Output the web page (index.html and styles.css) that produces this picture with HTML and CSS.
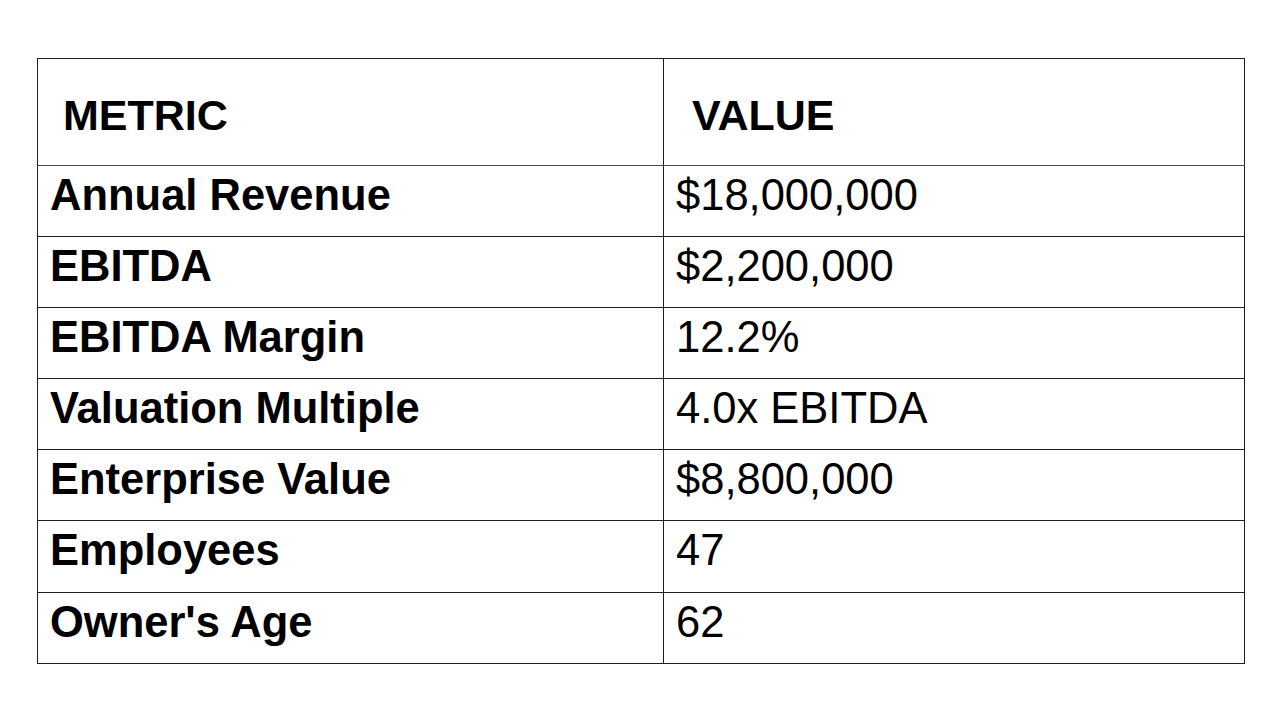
FILE: index.html
```html
<!DOCTYPE html>
<html lang="en">
<head>
<meta charset="utf-8">
<title>Metrics</title>
<link rel="stylesheet" href="styles.css">
</head>
<body>
<div class="page">
  <table class="metrics">
    <colgroup>
      <col class="col-metric">
      <col class="col-value">
    </colgroup>
    <thead>
      <tr>
        <th class="h-metric">METRIC</th>
        <th class="h-value">VALUE</th>
      </tr>
    </thead>
    <tbody>
      <tr><td class="name">Annual Revenue</td><td class="val">$18,000,000</td></tr>
      <tr><td class="name">EBITDA</td><td class="val">$2,200,000</td></tr>
      <tr><td class="name">EBITDA Margin</td><td class="val">12.2%</td></tr>
      <tr><td class="name">Valuation Multiple</td><td class="val">4.0x EBITDA</td></tr>
      <tr><td class="name">Enterprise Value</td><td class="val">$8,800,000</td></tr>
      <tr><td class="name">Employees</td><td class="val">47</td></tr>
      <tr><td class="name">Owner's Age</td><td class="val">62</td></tr>
    </tbody>
  </table>
</div>
</body>
</html>
```
FILE: styles.css
```css
html, body {
  margin: 0;
  padding: 0;
  background: #ffffff;
}

.page {
  padding: 58px 0 0 37px;
  font-family: "Liberation Sans", Arial, sans-serif;
  color: #000000;
}

.metrics {
  border-collapse: collapse;
  table-layout: fixed;
  width: 1207px;
  border: 1px solid #333333;
}

.col-metric { width: 626px; }
.col-value { width: 581px; }

.metrics th,
.metrics td {
  text-align: left;
  vertical-align: top;
  white-space: nowrap;
  border: 1px solid #1e1e1e;
  line-height: 50px;
}

.metrics th {
  height: 107px;
  box-sizing: border-box;
  font-size: 43px;
  font-weight: bold;
  padding: 31px 0 0 0;
  border-bottom-color: #4a4a4a;
}

.h-metric { padding-left: 25px !important; }
.h-value { padding-left: 28px !important; }

.metrics td {
  height: 71.1px;
  box-sizing: border-box;
  font-size: 43.5px;
  padding: 4px 0 0 12px;
}

.metrics td.name { font-weight: bold; }
.metrics td.val { font-weight: normal; }
```
